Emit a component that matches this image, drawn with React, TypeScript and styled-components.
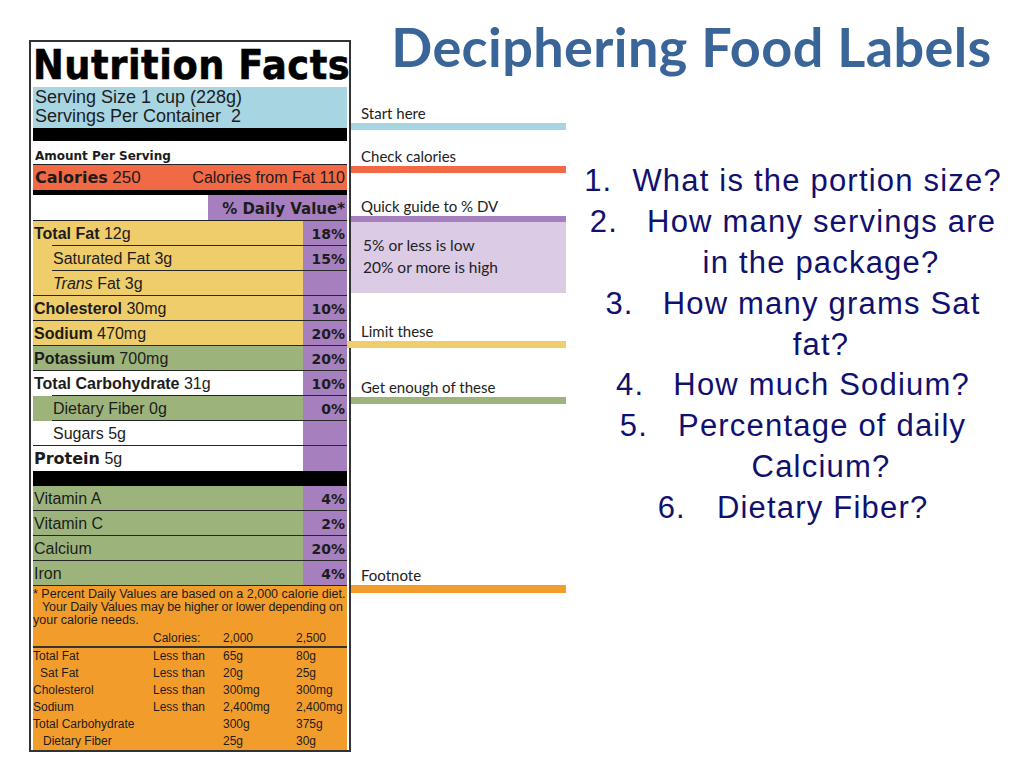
import React from 'react';
import styled, { createGlobalStyle } from 'styled-components';

const GlobalStyle = createGlobalStyle`
  * { box-sizing: border-box; }
  html, body { margin: 0; padding: 0; background: #ffffff; }
  body { width: 1024px; height: 768px; overflow: hidden; }
`;

const C = {
  blue: '#a8d5e2',
  red: '#f16a45',
  purple: '#a57fbe',
  lilac: '#dbcbe5',
  yellow: '#efcd6b',
  green: '#9cb47b',
  orange: '#f29c2c',
  white: '#ffffff',
  ink: '#1c1c1c',
};

const SANS = `"Liberation Sans", Arial, sans-serif`;
const HEAVY = `"DejaVu Sans", "Liberation Sans", sans-serif`;

const Page = styled.div`
  width: 1024px;
  height: 768px;
  display: flex;
  align-items: flex-start;
  background: #fff;
`;

/* ---------- Nutrition label ---------- */
const Label = styled.div`
  margin-top: 40px;
  margin-left: 29px;
  width: 322px;
  border: 2px solid #333;
  padding: 0 2px;
  background: #fff;
  font-family: ${SANS};
  color: ${C.ink};
  display: flex;
  flex-direction: column;
`;

const LabelTitle = styled.div`
  height: 45px;
  padding-top: 2px;
  white-space: nowrap;
`;

const TitleText = styled.span`
  display: inline-block;
  font-family: ${HEAVY};
  font-weight: 700;
  font-size: 40px;
  line-height: 43px;
  color: #000;
  letter-spacing: 0.6px;
  transform: scaleX(0.92);
  transform-origin: left center;
  -webkit-text-stroke: 0.6px #000;
`;

const Serving = styled.div`
  background: ${C.blue};
  height: 41px;
  padding-top: 1px;
  padding-left: 2px;
  font-size: 18px;
  line-height: 19px;
`;

const BlackBar = styled.div<{ $h: number }>`
  height: ${(p) => p.$h}px;
  background: #000;
`;

const AmountRow = styled.div`
  height: 24px;
  padding-top: 8px;
  padding-left: 2px;
  border-bottom: 1px solid #222;
  font-family: ${HEAVY};
  font-weight: 700;
  font-size: 12px;
  line-height: 14px;
`;

const CaloriesRow = styled.div`
  height: 25px;
  background: ${C.red};
  display: flex;
  align-items: center;
  justify-content: space-between;
  padding: 1px 2px 0 2px;
  font-size: 16px;
`;

const Heavy = styled.span<{ $size?: number }>`
  font-family: ${HEAVY};
  font-weight: 700;
  font-size: ${(p) => p.$size ?? 16}px;
`;

const Num = styled.span<{ $size?: number }>`
  font-size: ${(p) => p.$size ?? 16}px;
`;

const DVRow = styled.div`
  height: 26px;
  display: flex;
  justify-content: flex-end;
  border-bottom: 1px solid #222;
`;

const DVBox = styled.div`
  width: 139px;
  background: ${C.purple};
  display: flex;
  align-items: center;
  justify-content: flex-end;
  padding: 2px 2px 0 0;
  font-family: ${HEAVY};
  font-weight: 700;
  font-size: 15px;
`;

/* each nutrient row: label + % column; the rule under it may start indented */
const Row = styled.div<{ $bg: string; $lineIndent: number | null }>`
  position: relative;
  height: 25px;
  display: flex;
  background: ${(p) => p.$bg};
  &::after {
    content: '';
    display: ${(p) => (p.$lineIndent === null ? 'none' : 'block')};
    position: absolute;
    left: ${(p) => p.$lineIndent ?? 0}px;
    right: 0;
    bottom: 0;
    height: 1px;
    background: #262626;
  }
`;

const RowLabel = styled.div<{ $indent: number }>`
  flex: 1;
  padding-left: ${(p) => p.$indent}px;
  font-size: 16px;
  line-height: 25px;
  white-space: nowrap;
`;

const Bold = styled.span`
  font-weight: 700;
`;

const Ital = styled.span`
  font-style: italic;
`;

const Pct = styled.div`
  width: 44px;
  background: ${C.purple};
  text-align: right;
  padding-right: 2px;
  font-family: ${HEAVY};
  font-weight: 700;
  font-size: 14px;
  line-height: 26px;
`;

const Footnote = styled.div`
  background: ${C.orange};
  padding-top: 2px;
  font-size: 12.5px;
  line-height: 13px;
  color: #1d1d1d;
`;

const FootLine = styled.div<{ $indent?: number; $tight?: boolean }>`
  padding-left: ${(p) => p.$indent ?? 0}px;
  letter-spacing: ${(p) => (p.$tight ? '-0.12px' : '0')};
  white-space: nowrap;
`;

const TableRow = styled.div<{ $header?: boolean }>`
  display: grid;
  grid-template-columns: 120px 70px 73px 1fr;
  height: ${(p) => (p.$header ? 18 : 17)}px;
  margin-top: ${(p) => (p.$header ? 3 : 0)}px;
  border-bottom: ${(p) => (p.$header ? '2px solid #333' : 'none')};
  font-size: 12px;
  line-height: 17px;
  white-space: nowrap;
`;

const TCell = styled.div<{ $indent?: number }>`
  padding-left: ${(p) => p.$indent ?? 0}px;
`;

/* ---------- Right section ---------- */
const Right = styled.div`
  flex: 1;
  display: flex;
  flex-direction: column;
`;

const Title = styled.h1`
  margin: 0;
  padding: 16px 0 0 8px;
  text-align: center;
  font-family: Lato, "Open Sans", sans-serif;
  font-weight: 700;
  font-size: 54px;
  line-height: 62px;
  letter-spacing: 0.4px;
  color: #3a6599;
  white-space: nowrap;
`;

const Body = styled.div`
  display: flex;
  align-items: flex-start;
`;

const Callouts = styled.div`
  width: 215px;
  display: flex;
  flex-direction: column;
`;

const Callout = styled.div<{ $top: number }>`
  margin-top: ${(p) => p.$top}px;
  display: flex;
  flex-direction: column;
`;

const Caption = styled.div`
  height: 20px;
  line-height: 20px;
  padding-left: 10px;
  font-family: Lato, "Open Sans", sans-serif;
  font-size: 15px;
  color: #222;
  white-space: nowrap;
`;

const Stripe = styled.div<{ $color: string; $h: number; $extend?: number }>`
  height: ${(p) => p.$h}px;
  background: ${(p) => p.$color};
  margin-left: -${(p) => p.$extend ?? 0}px;
`;

const GuideBox = styled.div`
  height: 71px;
  background: ${C.lilac};
  padding: 12px 0 0 12px;
  font-family: Lato, "Open Sans", sans-serif;
  font-size: 15.5px;
  line-height: 22px;
  color: #222;
`;

const List = styled.ol`
  flex: 1;
  margin: 83px 0 0 0;
  padding: 0 4px 0 0;
  list-style: none;
  font-family: ${SANS};
  font-size: 31px;
  letter-spacing: 1.2px;
  color: #10106e;
`;

const ListLine = styled.li<{ $cont?: boolean }>`
  height: 40.9px;
  line-height: 40.9px;
  text-align: center;
  white-space: pre;
  padding-left: ${(p) => (p.$cont ? 56 : 0)}px;
`;

const ItemNum = styled.span<{ $gap: number }>`
  display: inline-block;
  margin-right: ${(p) => p.$gap}px;
`;

/* ---------- Data ---------- */
type NRow = {
  bg: string;
  indent: number;
  lineIndent: number | null;
  content: React.ReactNode;
  pct?: string;
};

const nutrients: NRow[] = [
  { bg: C.yellow, indent: 1, lineIndent: 19, content: <><Bold>Total Fat</Bold> 12g</>, pct: '18%' },
  { bg: C.yellow, indent: 20, lineIndent: 19, content: <>Saturated Fat 3g</>, pct: '15%' },
  { bg: C.yellow, indent: 20, lineIndent: 0, content: <><Ital>Trans</Ital> Fat 3g</> },
  { bg: C.yellow, indent: 1, lineIndent: 0, content: <><Bold>Cholesterol</Bold> 30mg</>, pct: '10%' },
  { bg: C.yellow, indent: 1, lineIndent: 0, content: <><Bold>Sodium</Bold> 470mg</>, pct: '20%' },
  { bg: C.green, indent: 1, lineIndent: 0, content: <><Bold>Potassium</Bold> 700mg</>, pct: '20%' },
  { bg: C.white, indent: 1, lineIndent: 19, content: <><Bold>Total Carbohydrate</Bold> 31g</>, pct: '10%' },
  { bg: C.green, indent: 20, lineIndent: 19, content: <>Dietary Fiber 0g</>, pct: '0%' },
  { bg: C.white, indent: 20, lineIndent: 0, content: <>Sugars 5g</> },
  { bg: C.white, indent: 1, lineIndent: null, content: <><Heavy>Protein</Heavy> 5g</> },
];

const vitamins: NRow[] = [
  { bg: C.green, indent: 1, lineIndent: 0, content: <>Vitamin A</>, pct: '4%' },
  { bg: C.green, indent: 1, lineIndent: 0, content: <>Vitamin C</>, pct: '2%' },
  { bg: C.green, indent: 1, lineIndent: 0, content: <>Calcium</>, pct: '20%' },
  { bg: C.green, indent: 1, lineIndent: 0, content: <>Iron</>, pct: '4%' },
];

const dvTable: [string, number, string, string, string][] = [
  ['Total Fat', 0, 'Less than', '65g', '80g'],
  ['Sat Fat', 7, 'Less than', '20g', '25g'],
  ['Cholesterol', 0, 'Less than', '300mg', '300mg'],
  ['Sodium', 0, 'Less than', '2,400mg', '2,400mg'],
  ['Total Carbohydrate', 0, '', '300g', '375g'],
  ['Dietary Fiber', 10, '', '25g', '30g'],
];

const questions: { n: string; gap: number; lines: string[] }[] = [
  { n: '1.', gap: 20, lines: ['What is the portion size?'] },
  { n: '2.', gap: 29, lines: ['How many servings are', 'in the package?'] },
  { n: '3.', gap: 29, lines: ['How many grams Sat', 'fat?'] },
  { n: '4.', gap: 29, lines: ['How much Sodium?'] },
  { n: '5.', gap: 30, lines: ['Percentage of daily', 'Calcium?'] },
  { n: '6.', gap: 31, lines: ['Dietary Fiber?'] },
];

const NutrientRow: React.FC<{ r: NRow }> = ({ r }) => (
  <Row $bg={r.bg} $lineIndent={r.lineIndent}>
    <RowLabel $indent={r.indent}>{r.content}</RowLabel>
    <Pct>{r.pct ?? ''}</Pct>
  </Row>
);

export default function App() {
  return (
    <>
      <GlobalStyle />
      <Page>
        <Label>
          <LabelTitle>
            <TitleText>Nutrition Facts</TitleText>
          </LabelTitle>
          <Serving>
            <div>Serving Size 1 cup (228g)</div>
            <div>Servings Per Container&nbsp; 2</div>
          </Serving>
          <BlackBar $h={13} />
          <AmountRow>Amount Per Serving</AmountRow>
          <CaloriesRow>
            <span>
              <Heavy>Calories</Heavy> <Num $size={17}>250</Num>
            </span>
            <span>Calories from Fat 110</span>
          </CaloriesRow>
          <BlackBar $h={5} />
          <DVRow>
            <DVBox>% Daily Value*</DVBox>
          </DVRow>
          {nutrients.map((r, i) => (
            <NutrientRow key={i} r={r} />
          ))}
          <BlackBar $h={15} />
          {vitamins.map((r, i) => (
            <NutrientRow key={i} r={r} />
          ))}
          <Footnote>
            <FootLine>* Percent Daily Values are based on a 2,000 calorie diet.</FootLine>
            <FootLine $indent={9} $tight>
              Your Daily Values may be higher or lower depending on
            </FootLine>
            <FootLine>your calorie needs.</FootLine>
            <TableRow $header>
              <TCell />
              <TCell>Calories:</TCell>
              <TCell>2,000</TCell>
              <TCell>2,500</TCell>
            </TableRow>
            {dvTable.map(([name, ind, lt, a, b]) => (
              <TableRow key={name}>
                <TCell $indent={ind}>{name}</TCell>
                <TCell>{lt}</TCell>
                <TCell>{a}</TCell>
                <TCell>{b}</TCell>
              </TableRow>
            ))}
          </Footnote>
        </Label>

        <Right>
          <Title>Deciphering Food Labels</Title>
          <Body>
            <Callouts>
              <Callout $top={25}>
                <Caption>Start here</Caption>
                <Stripe $color={C.blue} $h={7} />
              </Callout>
              <Callout $top={16}>
                <Caption>Check calories</Caption>
                <Stripe $color={C.red} $h={7} />
              </Callout>
              <Callout $top={23}>
                <Caption>Quick guide to % DV</Caption>
                <Stripe $color={C.purple} $h={6} />
                <GuideBox>
                  <div>5% or less is low</div>
                  <div>20% or more is high</div>
                </GuideBox>
              </Callout>
              <Callout $top={28}>
                <Caption>Limit these</Caption>
                <Stripe $color={C.yellow} $h={7} $extend={47} />
              </Callout>
              <Callout $top={29}>
                <Caption>Get enough of these</Caption>
                <Stripe $color={C.green} $h={7} />
              </Callout>
              <Callout $top={161}>
                <Caption>Footnote</Caption>
                <Stripe $color={C.orange} $h={8} />
              </Callout>
            </Callouts>
            <List>
              {questions.map((q) =>
                q.lines.map((line, j) =>
                  j === 0 ? (
                    <ListLine key={q.n + j}>
                      <ItemNum $gap={q.gap}>{q.n}</ItemNum>
                      {line}
                    </ListLine>
                  ) : (
                    <ListLine key={q.n + j} $cont>
                      {line}
                    </ListLine>
                  )
                )
              )}
            </List>
          </Body>
        </Right>
      </Page>
    </>
  );
}
